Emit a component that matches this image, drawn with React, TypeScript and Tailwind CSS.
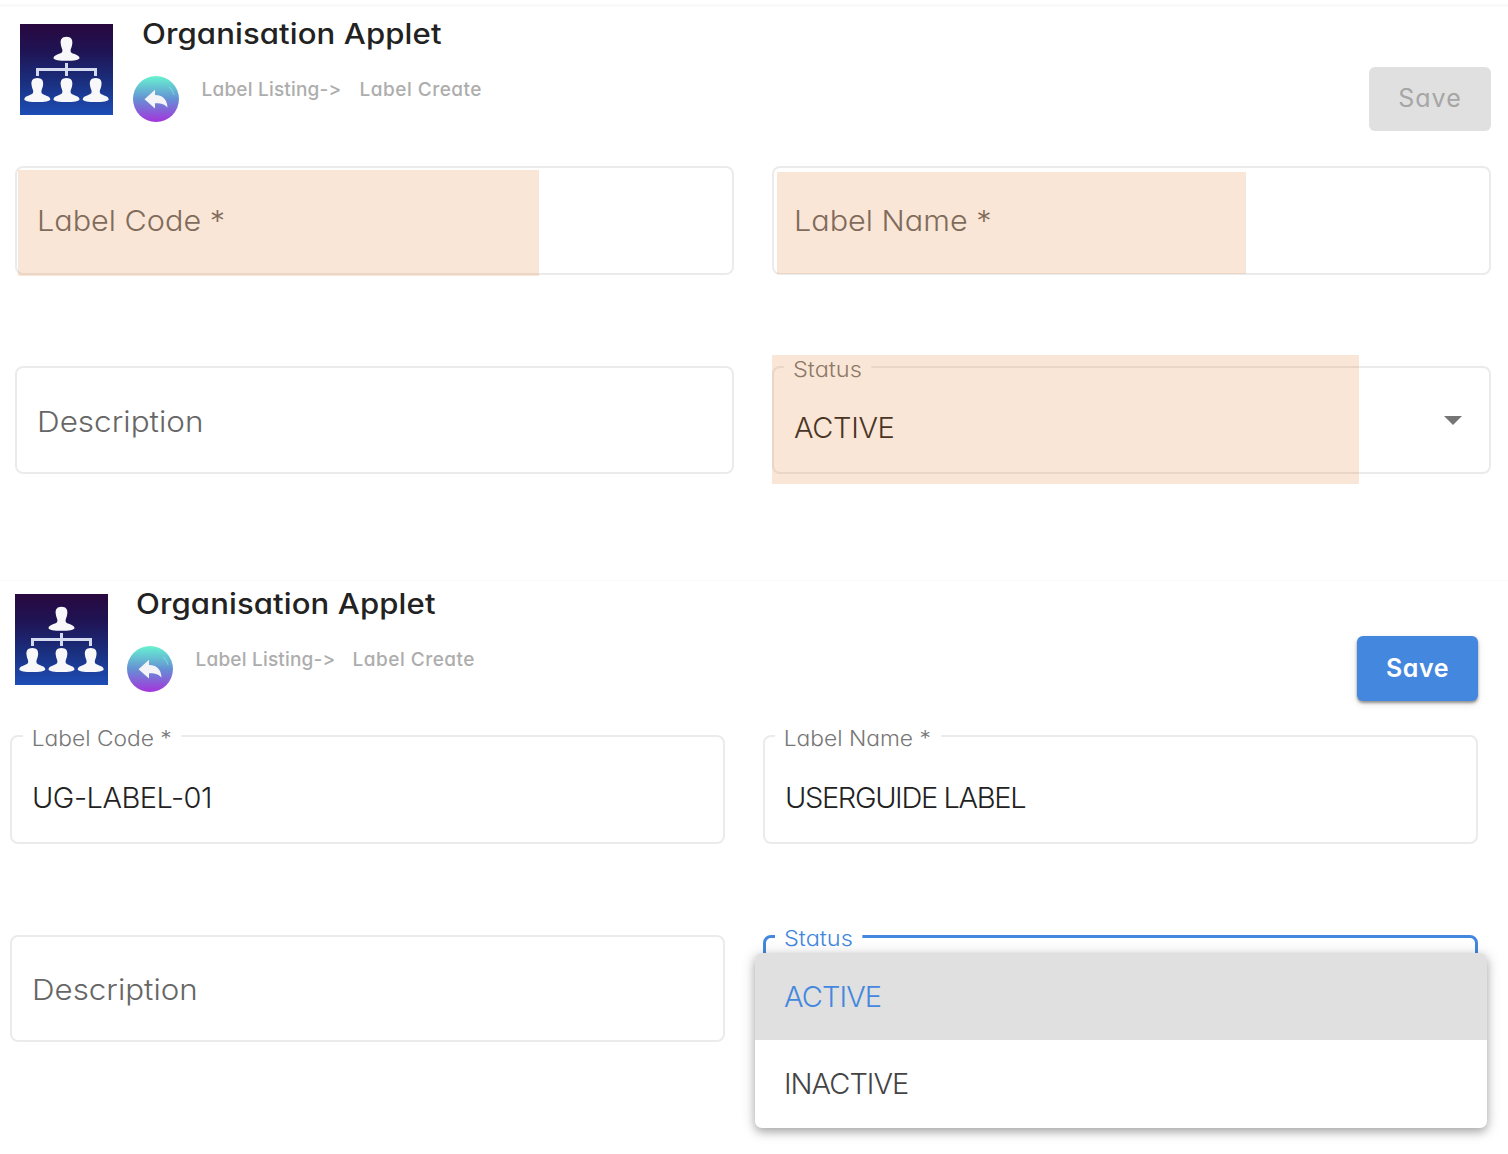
import type { ReactNode } from "react";

function Person({ x, y }: { x: number; y: number }) {
  return (
    <path
      transform={`translate(${x} ${y})`}
      d="M0 0C-4.6 0-6.2 2.8-5.8 6.6C-5.6 9.4-4.6 10.8-4.2 12.6C-3.8 15.6-4.8 16-7.4 17C-10.8 18.2-13 19.4-13 21.2C-13 23.2-7 24-0 24C7 24 13 23.2 13 21.2C13 19.4 10.8 18.2 7.4 17C4.8 16 3.8 15.6 4.2 12.6C4.6 10.8 5.6 9.4 5.8 6.6C6.2 2.8 4.6 0 0 0Z"
      fill="#f8f8fb"
    />
  );
}

function Logo({ id }: { id: string }) {
  return (
    <svg width="93" height="91" viewBox="0 0 93 91" className="shrink-0">
      <defs>
        <linearGradient id={id} x1="0" y1="0" x2="0" y2="1">
          <stop offset="0" stopColor="#29083f" />
          <stop offset="0.3" stopColor="#1f1454" />
          <stop offset="0.65" stopColor="#1a3080" />
          <stop offset="1" stopColor="#1d4db6" />
        </linearGradient>
      </defs>
      <rect width="93" height="91" fill={`url(#${id})`} />
      <Person x={46.5} y={12.8} />
      <Person x={17.3} y={54} />
      <Person x={46.5} y={54} />
      <Person x={75.7} y={54} />
      <path d="M46.5 39V52M17.5 52V45.5H75.5V52" fill="none" stroke="#d5dbee" strokeWidth="3" />
    </svg>
  );
}

function BackButton({ id }: { id: string }) {
  return (
    <svg width="46" height="46" viewBox="0 0 46 46" className="shrink-0">
      <defs>
        <linearGradient id={id} x1="0" y1="0" x2="0" y2="1">
          <stop offset="0" stopColor="#67f3d0" />
          <stop offset="0.5" stopColor="#6590d4" />
          <stop offset="1" stopColor="#a534dc" />
        </linearGradient>
      </defs>
      <circle cx="23" cy="23" r="23" fill={`url(#${id})`} />
      <path d="M11.5 23.2L22 13.8V19C29.5 19 34.3 23.5 34.5 31.5C31.5 27.8 27.5 27 22 27.2V32.5Z" fill="#f4f4f8" />
      <path d="M36 11Q40 14 41 19" fill="none" stroke="#8ff0e4" strokeOpacity="0.5" strokeWidth="1.2" />
    </svg>
  );
}

function Header({ id, className, crumbWidth, children }: { id: string; className: string; crumbWidth: string; children: ReactNode }) {
  return (
    <header className="flex h-[142px] items-start">
      <Logo id={`${id}-logo`} />
      <div className={`flex flex-col ${className}`}>
        <h1 className="-mt-[6px] ml-[9px] origin-left scale-x-[1.11] whitespace-nowrap text-[28px] font-[450] leading-[32px] tracking-[0.1px] text-[#222]">
          Organisation Applet
        </h1>
        <div className="mt-[26px] flex items-start">
          <BackButton id={`${id}-back`} />
          <nav className="ml-[22.5px] flex whitespace-nowrap pt-[4px] text-[19px] font-medium leading-[20px] text-[#adadad]">
            <span className={`${crumbWidth} tracking-[0.2px]`}>Label Listing-&gt;</span>
            <span className="tracking-[0.5px]">Label Create</span>
          </nav>
        </div>
      </div>
      {children}
    </header>
  );
}

function Field({ children, className }: { children: ReactNode; className: string }) {
  return <div className={`relative flex rounded-[8px] border-2 border-[#ebebeb] px-[20px] ${className}`}>{children}</div>;
}

function FloatingLabel({ children, className }: { children: ReactNode; className: string }) {
  return (
    <span className={`absolute origin-left bg-white pl-[8px] pr-[9px] text-[21px] font-light leading-[28px] ${className}`}>
      {children}
    </span>
  );
}

const placeholder = "origin-left text-[29px] font-light leading-[36px] text-[#666]";
const value = "text-[29px] font-light leading-[36px] text-[#222]";

export default function App() {
  return (
    <main className="h-[1154px] w-[1508px] overflow-hidden bg-white font-['Inter',sans-serif] [font-feature-settings:'cv11'_1,'calt'_0]">
      <section className="mt-[4px] h-[576px] border-t-[3px] border-[#fafafa] pl-[15px] pr-[17px] pt-[17px]">
        <div className="pl-[5px]">
          <Header id="first" className="ml-[20px]" crumbWidth="w-[158px]">
            <button className="ml-auto mt-[43px] h-[64px] w-[122px] rounded-[6px] bg-[#e0e0e0] text-[25px] tracking-[1px] text-[#a6a6a6]">
              Save
            </button>
          </Header>
        </div>
        <div className="grid grid-cols-2 gap-x-[38px] gap-y-[91px]">
          <Field className="h-[109px] items-center">
            <span className={`${placeholder} scale-x-[1.055]`}>Label Code *</span>
            <i className="absolute left-[1px] top-[2px] h-[106px] w-[521px] bg-[#e68232]/20" />
          </Field>
          <Field className="h-[109px] items-center">
            <span className={`${placeholder} scale-x-[1.055]`}>Label Name *</span>
            <i className="absolute left-[3px] top-[4px] h-[102px] w-[469px] bg-[#e68232]/20" />
          </Field>
          <Field className="h-[108px] items-center">
            <span className={`${placeholder} scale-x-[1.085] pt-[3px]`}>Description</span>
          </Field>
          <Field className="h-[108px] items-center justify-between">
            <FloatingLabel className="-top-[12px] left-[10px] scale-x-[1.12] text-[#777]">Status</FloatingLabel>
            <span className={`${value} pt-[16px] tracking-[-0.35px]`}>ACTIVE</span>
            <svg width="18" height="9" viewBox="0 0 18 9" className="mr-[7px] mt-px">
              <path d="M0 0H18L9 9Z" fill="#757575" />
            </svg>
            <i className="absolute -left-[2px] -top-[13px] h-[129px] w-[587px] bg-[#e68232]/20" />
          </Field>
        </div>
      </section>

      <section className="h-[574px] border-t border-[#fafafa] pl-[10px] pr-[30px] pt-[13px]">
        <div className="pl-[5px]">
          <Header id="second" className="ml-[19px]" crumbWidth="w-[157px]">
            <button className="ml-auto mt-[42px] h-[65px] w-[121px] rounded-[6px] bg-[#4487de] text-[25px] font-semibold tracking-[0.5px] text-white shadow-[0_2px_3px_rgba(0,0,0,0.4),0_3px_8px_rgba(0,0,0,0.1)]">
              Save
            </button>
          </Header>
        </div>
        <div className="-mt-px grid grid-cols-2 gap-x-[38px] gap-y-[91px]">
          <Field className="h-[109px] items-center">
            <FloatingLabel className="-top-[12px] left-[11px] scale-x-[1.085] text-[#777]">Label Code *</FloatingLabel>
            <span className={`${value} pt-[17px] tracking-[-0.5px]`}>UG-LABEL-01</span>
          </Field>
          <Field className="h-[109px] items-center">
            <FloatingLabel className="-top-[12px] left-[10px] scale-x-[1.085] text-[#777]">Label Name *</FloatingLabel>
            <span className={`${value} pt-[17px] tracking-[-1.35px]`}>USERGUIDE LABEL</span>
          </Field>
          <Field className="h-[107px] items-center">
            <span className={`${placeholder} scale-x-[1.08] pt-[2px]`}>Description</span>
          </Field>
          <div className="relative h-[107px] rounded-[8px] border-[3px] border-[#4487de]">
            <FloatingLabel className="-top-[13px] left-[9px] scale-x-[1.12] text-[#4487de]">Status</FloatingLabel>
            <ul className="absolute -left-[11px] top-[15px] w-[732px] overflow-hidden rounded-[7px] bg-white text-[29px] font-light shadow-[0_4px_8px_rgba(0,0,0,0.25),0_2px_16px_rgba(0,0,0,0.16)]">
              <li className="flex h-[87px] items-center bg-[#e0e0e0] pl-[29px] tracking-[-0.9px] text-[#4487de]">ACTIVE</li>
              <li className="flex h-[88px] items-center pl-[29px] tracking-[-1px] text-[#444]">INACTIVE</li>
            </ul>
          </div>
        </div>
      </section>
    </main>
  );
}
